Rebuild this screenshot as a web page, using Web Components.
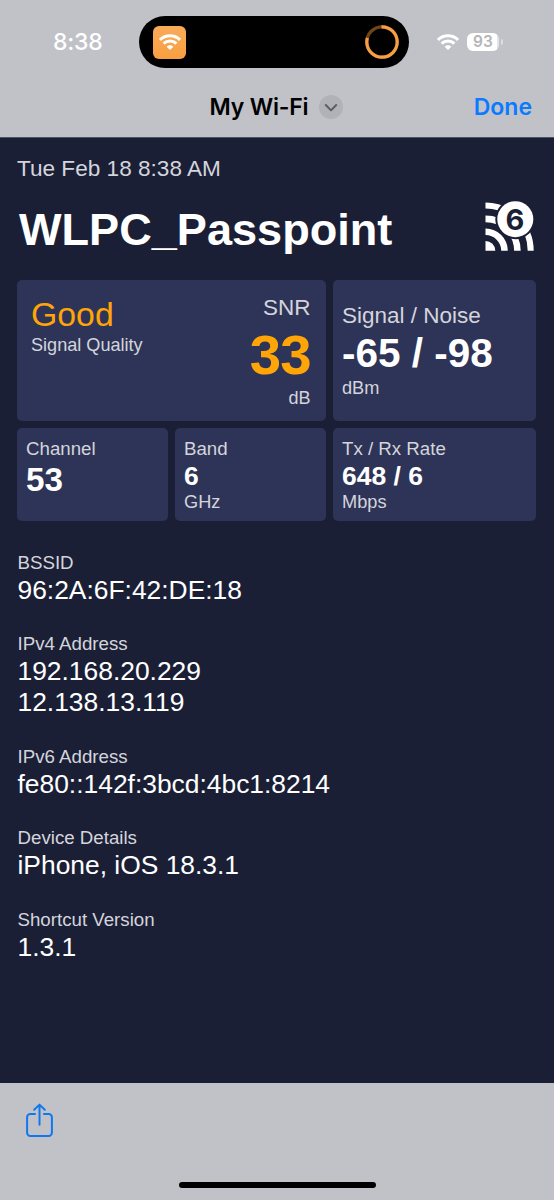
<!DOCTYPE html>
<html lang="en">
<head>
<meta charset="UTF-8">
<meta name="viewport" content="width=device-width, initial-scale=1">
<title>My Wi-Fi</title>
<style>
  :root {
    --chrome: #c1c2c8;
    --screen: #1b1f36;
    --card: #2e3457;
    --label: #d4d5dc;
    --accent: #ffa508;
    --blue: #0a7aff;
    --font-ui: Inter, "Liberation Sans", sans-serif;
    --font-page: "Liberation Sans", Arial, sans-serif;
  }

  body {
    margin: 0;
    background: var(--chrome);
  }
</style>
</head>
<body>

<phone-screen>
  <status-bar slot="top" time="8:38" battery="93"></status-bar>
  <nav-bar slot="top" action="Done">My Wi-Fi</nav-bar>

  <report-header date="Tue Feb 18 8:38 AM" generation="6">WLPC_Passpoint</report-header>

  <metric-grid>
    <quality-card rating="Good" caption="Signal Quality" label="SNR" value="33" unit="dB"></quality-card>
    <metric-card size="large" label="Signal / Noise" unit="dBm">-65 / -98</metric-card>
    <metric-card size="medium" label="Channel">53</metric-card>
    <metric-card label="Band" unit="GHz">6</metric-card>
    <metric-card label="Tx / Rx Rate" unit="Mbps">648 / 6</metric-card>
  </metric-grid>

  <detail-list>
    <detail-item label="BSSID"><div>96:2A:6F:42:DE:18</div></detail-item>
    <detail-item label="IPv4 Address"><div>192.168.20.229</div><div>12.138.13.119</div></detail-item>
    <detail-item label="IPv6 Address"><div>fe80::142f:3bcd:4bc1:8214</div></detail-item>
    <detail-item label="Device Details"><div>iPhone, iOS 18.3.1</div></detail-item>
    <detail-item label="Shortcut Version"><div>1.3.1</div></detail-item>
  </detail-list>

  <tool-bar slot="bottom"></tool-bar>
</phone-screen>

<script>
/**
 * Base class: renders the template once in an open shadow root
 */
class BaseElement extends HTMLElement {
  constructor() {
    super();
    this.attachShadow({ mode: "open" });
  }

  connectedCallback() {
    this.shadowRoot.innerHTML = this.template();
  }

  // Attribute value or empty string
  attr(name) {
    return this.getAttribute(name) || "";
  }
}

/**
 * Full screen layout: top bars, dark content, bottom bar
 * @element phone-screen
 */
class PhoneScreen extends BaseElement {
  template() {
    return `
      <style>
        :host {
          display: flex;
          flex-direction: column;
          height: 1200px;
          overflow: hidden;
        }
        header {
          height: 138px;
          border-bottom: 1px solid #4d5064;
          box-sizing: border-box;
          flex: none;
        }
        main {
          flex: 1;
          box-sizing: border-box;
          padding: 0 18px 0 17px;
          background: var(--screen);
          font-family: var(--font-page);
        }
      </style>
      <header><slot name="top"></slot></header>
      <main><slot></slot></main>
      <slot name="bottom"></slot>
    `;
  }
}

/**
 * Wi-Fi fan glyph, drawn in the current colour
 * @element wifi-glyph
 */
class WifiGlyph extends BaseElement {
  template() {
    return `
      <style>
        :host { display: block; width: 22px; height: 16px; }
        svg { display: block; width: 100%; height: 100%; }
      </style>
      <svg viewBox="0 0 22 16" fill="none" stroke="currentColor" stroke-width="2.9">
        <path d="M1 5.9a14.3 14.3 0 0 1 20 0"/>
        <path d="M4.6 9.6a9.2 9.2 0 0 1 12.8 0"/>
        <path d="M11 16 7.6 12.7a4.9 4.9 0 0 1 6.8 0Z" fill="currentColor" stroke="none"/>
      </svg>
    `;
  }
}

/**
 * Status bar with clock, dynamic island, signal and battery
 * @element status-bar
 */
class StatusBar extends BaseElement {
  template() {
    return `
      <style>
        :host {
          display: grid;
          grid-template-columns: 139px 270px 1fr;
          align-items: center;
          height: 84px;
          color: #fff;
          font-family: var(--font-ui);
        }
        .time {
          padding-left: 53px;
          font-size: 23px;
          font-weight: 500;
          letter-spacing: -0.2px;
          line-height: 28px;
        }
        .island {
          display: flex;
          align-items: center;
          justify-content: space-between;
          box-sizing: border-box;
          height: 52px;
          padding: 0 10px 0 14px;
          border-radius: 26px;
          background: #000;
        }
        .app {
          display: flex;
          align-items: center;
          justify-content: center;
          width: 33px;
          height: 33px;
          border-radius: 6px;
          background: linear-gradient(#f8ab58, #f99f42);
        }
        .ring { display: block; width: 34px; height: 34px; }
        .right {
          display: flex;
          align-items: center;
          padding: 0 0 1px 28px;
        }
        .battery {
          display: flex;
          align-items: center;
          margin-left: 8px;
        }
        .level {
          width: 32px;
          height: 18px;
          border-radius: 6px;
          background: linear-gradient(90deg, #fff 94%, #e4e4e8 94%);
          color: #b4b5bb;
          font-size: 15.5px;
          font-weight: 600;
          line-height: 18.5px;
          text-align: center;
        }
        .cap {
          width: 2px;
          height: 6px;
          margin-left: 1.5px;
          border-radius: 0 2px 2px 0;
          background: #dcdce1;
        }
      </style>
      <div class="time">${this.attr("time")}</div>
      <div class="island">
        <div class="app"><wifi-glyph></wifi-glyph></div>
        <svg class="ring" viewBox="0 0 34 34" fill="none" stroke-width="3.2">
          <circle cx="17" cy="17" r="15.2" stroke="#6e4515"/>
          <circle cx="17" cy="17" r="15.2" stroke="#f79f45" pathLength="100"
            stroke-dasharray="80 20" transform="rotate(-92 17 17)"/>
        </svg>
      </div>
      <div class="right">
        <wifi-glyph></wifi-glyph>
        <div class="battery">
          <div class="level">${this.attr("battery")}</div>
          <div class="cap"></div>
        </div>
      </div>
    `;
  }
}

/**
 * Navigation bar with title menu and action
 * @element nav-bar
 */
class NavBar extends BaseElement {
  template() {
    return `
      <style>
        :host {
          display: grid;
          grid-template-columns: 1fr auto 1fr;
          align-items: center;
          height: 46px;
          padding: 0 22px 0 21px;
          color: #000;
          font-family: var(--font-ui);
          font-size: 23px;
          font-weight: 600;
          line-height: 28px;
        }
        .title {
          grid-column: 2;
          display: flex;
          align-items: center;
          gap: 11px;
          letter-spacing: -0.2px;
        }
        svg { display: block; width: 24px; height: 24px; }
        .action {
          justify-self: end;
          color: var(--blue);
          letter-spacing: 0;
        }
      </style>
      <div class="title">
        <span><slot></slot></span>
        <svg viewBox="0 0 24 24" fill="none">
          <circle cx="12" cy="12" r="12" fill="#b1b2b8"/>
          <path d="m6.8 10 5.2 5.4 5.2-5.4" stroke="#5d5e64" stroke-width="2"
            stroke-linecap="round" stroke-linejoin="round"/>
        </svg>
      </div>
      <div class="action">${this.attr("action")}</div>
    `;
  }
}

/**
 * Wi-Fi generation badge
 * @element wifi-badge
 */
class WifiBadge extends BaseElement {
  template() {
    return `
      <style>
        :host { display: block; width: 50px; height: 50px; }
        svg { display: block; width: 50px; height: 50px; }
        text {
          font-family: var(--font-ui);
          font-size: 29px;
          font-weight: 700;
        }
      </style>
      <svg viewBox="0 0 50 50">
        <defs><clipPath id="box"><path d="M.5 0H50V49.8H.5Z"/></clipPath></defs>
        <g clip-path="url(#box)" fill="none" stroke="#fff">
          <circle cx=".5" cy="49.8" r="9.8" fill="#fff" stroke="none"/>
          <circle cx=".5" cy="49.8" r="19" stroke-width="6.6"/>
          <circle cx=".5" cy="49.8" r="31.9" stroke-width="6.6"/>
          <circle cx=".5" cy="49.8" r="45.2" stroke-width="6"/>
        </g>
        <circle cx="30.3" cy="18.2" r="20" fill="#1b1f36"/>
        <circle cx="30.3" cy="18.2" r="18" fill="#fff"/>
        <text x="29.8" y="29" text-anchor="middle" fill="#1b1f36">${this.attr("value")}</text>
      </svg>
    `;
  }
}

/**
 * Date, network name and badge
 * @element report-header
 */
class ReportHeader extends BaseElement {
  template() {
    return `
      <style>
        :host { display: block; padding-top: 18px; color: #fff; }
        .date {
          color: var(--label);
          font-size: 22.6px;
          line-height: 26px;
        }
        .row {
          display: flex;
          justify-content: space-between;
          height: 78px;
          padding: 19px 1.5px 0 2px;
          box-sizing: border-box;
        }
        .name {
          font-size: 45.1px;
          font-weight: 700;
          line-height: 58px;
        }
      </style>
      <div class="date">${this.attr("date")}</div>
      <div class="row">
        <div class="name"><slot></slot></div>
        <wifi-badge value="${this.attr("generation")}"></wifi-badge>
      </div>
    `;
  }
}

/**
 * Grid of the metric cards
 * @element metric-grid
 */
class MetricGrid extends BaseElement {
  template() {
    return `
      <style>
        :host {
          display: grid;
          grid-template: 141px 93px / 150.5px 150.5px 203px;
          gap: 7.5px;
          padding-top: 19.5px;
        }
        ::slotted(quality-card) { grid-column: span 2; }
      </style>
      <slot></slot>
    `;
  }
}

/**
 * Wide card: rating on the left, SNR on the right
 * @element quality-card
 */
class QualityCard extends BaseElement {
  template() {
    return `
      <style>
        :host {
          display: flex;
          justify-content: space-between;
          box-sizing: border-box;
          padding: 15px 15px 0 14px;
          border-radius: 5px;
          background: var(--card);
          color: var(--label);
        }
        .rating {
          color: var(--accent);
          font-size: 33.8px;
          line-height: 39px;
        }
        .caption { font-size: 18.1px; line-height: 22px; }
        .snr { text-align: right; }
        .label { font-size: 22.5px; line-height: 26px; }
        .value {
          margin-top: 2px;
          color: var(--accent);
          font-size: 56.4px;
          font-weight: 700;
          line-height: 64px;
          letter-spacing: -1px;
        }
        .unit { font-size: 18px; line-height: 22px; }
      </style>
      <div>
        <div class="rating">${this.attr("rating")}</div>
        <div class="caption">${this.attr("caption")}</div>
      </div>
      <div class="snr">
        <div class="label">${this.attr("label")}</div>
        <div class="value">${this.attr("value")}</div>
        <div class="unit">${this.attr("unit")}</div>
      </div>
    `;
  }
}

/**
 * Card with label, value and unit
 * @element metric-card
 * @attr {string} size - "large", "medium" or none
 */
class MetricCard extends BaseElement {
  template() {
    return `
      <style>
        :host {
          display: block;
          box-sizing: border-box;
          padding: 10px 9px 0;
          border-radius: 5px;
          background: var(--card);
          color: var(--label);
        }
        .label { font-size: 18.7px; line-height: 22px; }
        .value {
          color: #fff;
          font-size: 26.5px;
          font-weight: 700;
          line-height: 32px;
        }
        .unit { font-size: 18.2px; line-height: 20px; }
        :host([size="medium"]) .value { font-size: 33.2px; line-height: 40px; }
        :host([size="large"]) { padding-top: 23px; }
        :host([size="large"]) .label { font-size: 22.5px; line-height: 26px; }
        :host([size="large"]) .value { font-size: 40.5px; line-height: 48px; }
        :host([size="large"]) .unit { line-height: 22px; }
      </style>
      <div class="label">${this.attr("label")}</div>
      <div class="value"><slot></slot></div>
      <div class="unit">${this.attr("unit")}</div>
    `;
  }
}

/**
 * Vertical list of details
 * @element detail-list
 */
class DetailList extends BaseElement {
  template() {
    return `
      <style>
        :host {
          display: flex;
          flex-direction: column;
          gap: 27.4px;
          padding-top: 31px;
        }
      </style>
      <slot></slot>
    `;
  }
}

/**
 * Label with one or more value lines
 * @element detail-item
 */
class DetailItem extends BaseElement {
  template() {
    return `
      <style>
        :host { display: block; padding-left: 0.5px; color: #fff; }
        .label {
          color: var(--label);
          font-size: 18.7px;
          line-height: 22px;
        }
        .values { padding-top: 1px; font-size: 26.4px; line-height: 31px; }
      </style>
      <div class="label">${this.attr("label")}</div>
      <div class="values"><slot></slot></div>
    `;
  }
}

/**
 * Bottom bar with share button and home indicator
 * @element tool-bar
 */
class ToolBar extends BaseElement {
  template() {
    return `
      <style>
        :host {
          display: flex;
          flex-direction: column;
          justify-content: space-between;
          box-sizing: border-box;
          height: 117px;
          padding: 20px 0 12px;
          background: var(--chrome);
        }
        svg { display: block; width: 30px; height: 36px; margin-left: 25px; }
        .home {
          align-self: center;
          width: 197px;
          height: 6px;
          border-radius: 3px;
          background: #000;
        }
      </style>
      <svg viewBox="0 0 30 36" fill="none" stroke="#0f78ee" stroke-width="2"
        stroke-linecap="round" stroke-linejoin="round">
        <path d="M10.8 11H5.3a3.2 3.2 0 0 0-3.2 3.2v15.6A3.2 3.2 0 0 0 5.3 33h18.4a3.2 3.2 0 0 0 3.2-3.2V14.2a3.2 3.2 0 0 0-3.2-3.2h-5.5" stroke-linecap="butt"/>
        <path d="M14.5 21.8V1.8M9.2 6.8l5.3-5.2 5.3 5.2"/>
      </svg>
      <div class="home"></div>
    `;
  }
}

// Register the components
customElements.define("phone-screen", PhoneScreen);
customElements.define("wifi-glyph", WifiGlyph);
customElements.define("status-bar", StatusBar);
customElements.define("nav-bar", NavBar);
customElements.define("wifi-badge", WifiBadge);
customElements.define("report-header", ReportHeader);
customElements.define("metric-grid", MetricGrid);
customElements.define("quality-card", QualityCard);
customElements.define("metric-card", MetricCard);
customElements.define("detail-list", DetailList);
customElements.define("detail-item", DetailItem);
customElements.define("tool-bar", ToolBar);
</script>
</body>
</html>
